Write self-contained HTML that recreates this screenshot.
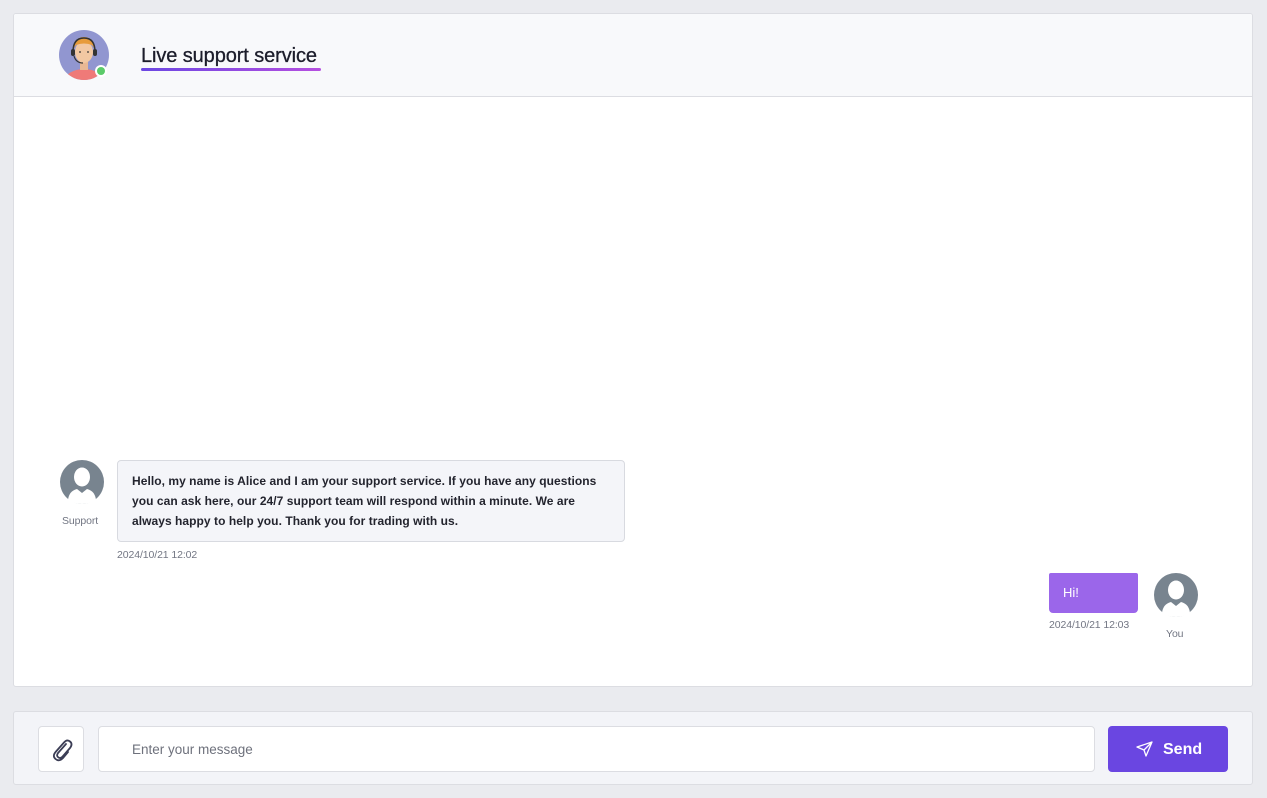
<!DOCTYPE html>
<html><head><meta charset="utf-8"><style>
*{box-sizing:border-box;margin:0;padding:0}
body{width:1267px;height:798px;background:#eaebef;font-family:"Liberation Sans",sans-serif;position:relative;overflow:hidden}
.main{position:absolute;left:13px;top:13px;width:1240px;height:674px;background:#fff;border:1px solid #dcdde2;border-radius:3px;overflow:hidden}
.hdr{height:83px;background:#f8f9fb;border-bottom:1px solid #dcdde2;position:relative}
.title{position:absolute;left:127px;top:31px;font-size:20px;color:#1c1d2b;letter-spacing:-0.1px;-webkit-text-stroke:0.3px #1c1d2b}
.ul{position:absolute;left:127px;top:54px;width:180px;height:3px;border-radius:2px;background:linear-gradient(90deg,#6b47e2,#b54fe0)}
.av{position:absolute}
.bubble{position:absolute;left:103px;top:446px;width:508px;height:82px;background:#f4f5f9;border:1px solid #d8dae0;border-radius:4px;padding:10px 14px;font-size:12px;letter-spacing:0.05px;line-height:20px;color:#23242e;font-weight:bold}
.small{position:absolute;font-size:10.5px;color:#727683;letter-spacing:-0.1px}
.hi{position:absolute;left:1035px;top:559px;width:89px;height:40px;background:#9b66ea;border-radius:2px 2px 4px 4px;color:#fff;font-size:13px;padding:12px 14px}
.bot{position:absolute;left:13px;top:711px;width:1240px;height:74px;background:#f3f4f8;border:1px solid #dcdde2;border-radius:3px}
.clip{position:absolute;left:24px;top:14px;width:46px;height:46px;background:#fff;border:1px solid #dcdde2;border-radius:4px}
.inp{position:absolute;left:84px;top:14px;width:997px;height:46px;background:#fff;border:1px solid #dcdde2;border-radius:4px;font-size:13.5px;color:#6e717c;padding:15px 33px}
.send{position:absolute;left:1094px;top:14px;width:120px;height:46px;background:#6a46e1;border-radius:4px;color:#fff;font-size:16px;font-weight:bold;padding:15px 0 0 55px}
</style></head><body>
<div class="main">
 <div class="hdr">
  <svg class="av" style="left:45px;top:16px" width="52" height="52" viewBox="0 0 52 52">
   <defs><clipPath id="c"><circle cx="25" cy="25" r="25"/></clipPath></defs>
   <circle cx="25" cy="25" r="25" fill="#9196d0"/>
   <g clip-path="url(#c)">
    <ellipse cx="25" cy="52" rx="20" ry="13" fill="#ef7a78"/>
    <rect x="21" y="30" width="8" height="10" fill="#e9b894"/>
    <ellipse cx="25" cy="22" rx="9" ry="11" fill="#f2c8a2"/>
    <path d="M15 18 Q16 7 25 7 Q34 7 35 18 L33 15 Q25 12 17 15Z" fill="#e79b3a"/>
    <path d="M14 22 Q14 8 25 8 Q36 8 36 22" fill="none" stroke="#333" stroke-width="1.5"/>
    <rect x="12" y="19" width="4" height="7" rx="2" fill="#333"/><rect x="34" y="19" width="4" height="7" rx="2" fill="#333"/>
    <path d="M15 26 Q17 33 24 33" fill="none" stroke="#333" stroke-width="1.2"/>
    <circle cx="21" cy="22" r="0.9" fill="#333"/><circle cx="29" cy="22" r="0.9" fill="#333"/>
   </g>
   <circle cx="42" cy="41" r="6" fill="#fff"/><circle cx="42" cy="41" r="4" fill="#5ccb6a"/>
  </svg>
  <div class="title">Live support service</div>
  <div class="ul"></div>
 </div>
 <svg class="av" style="left:46px;top:446px" width="44" height="44" viewBox="0 0 44 44">
  <circle cx="22" cy="22" r="22" fill="#78848f"/>
  <ellipse cx="22" cy="17" rx="8" ry="9.5" fill="#fff"/>
  <path d="M8 40 Q9 31 17 29 L22 33 L27 29 Q35 31 36 40 Q30 44 22 44 Q14 44 8 40Z" fill="#fff"/>
 </svg>
 <div class="small" style="left:48px;top:501px">Support</div>
 <div class="bubble">Hello, my name is Alice and I am your support service. If you have any questions<br>you can ask here, our 24/7 support team will respond within a minute. We are<br>always happy to help you. Thank you for trading with us.</div>
 <div class="small" style="left:103px;top:535px">2024/10/21 12:02</div>
 <div class="hi">Hi!</div>
 <div class="small" style="left:1035px;top:605px">2024/10/21 12:03</div>
 <svg class="av" style="left:1140px;top:559px" width="44" height="44" viewBox="0 0 44 44">
  <circle cx="22" cy="22" r="22" fill="#78848f"/>
  <ellipse cx="22" cy="17" rx="8" ry="9.5" fill="#fff"/>
  <path d="M8 40 Q9 31 17 29 L22 33 L27 29 Q35 31 36 40 Q30 44 22 44 Q14 44 8 40Z" fill="#fff"/>
 </svg>
 <div class="small" style="left:1152px;top:614px">You</div>
</div>
<div class="bot">
 <div class="clip"><svg width="46" height="46" viewBox="0 0 46 46"><path d="M27 17 L19 26 Q17 29 19.5 30.5 Q22 32 24 29 L31 21 Q34 17 31 14.5 Q28 12 25 15.5 L17 24.5 Q13 29 16.5 32 Q20 35 24 31 L29 25" fill="none" stroke="#3b3d55" stroke-width="1.8" stroke-linecap="round"/></svg></div>
 <div class="inp">Enter your message</div>
 <div class="send"><svg style="position:absolute;left:28px;top:15px" width="18" height="16" viewBox="0 0 18 16"><path d="M1 6 L16 1 L10 15 L8 9 Z M8 9 L16 1" fill="none" stroke="#fff" stroke-width="1.3" stroke-linejoin="round"/></svg>Send</div>
</div>
</body></html>
